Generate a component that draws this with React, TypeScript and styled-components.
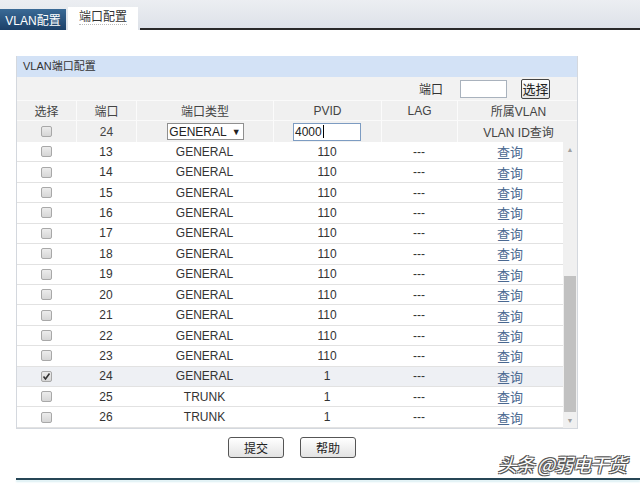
import React from 'react'
import styled, { createGlobalStyle } from 'styled-components'

const GlobalStyle = createGlobalStyle`
  body {
    margin: 0;
    background: #fff;
    font-family: "Liberation Sans", Arial, "Noto Sans CJK SC", sans-serif;
    font-size: 12px;
    color: #333;
  }
`

const Page = styled.div`
  position: relative;
  width: 640px;
  height: 489px;
  overflow: hidden;
`

const TabBar = styled.div`
  height: 30px;
  display: flex;
  align-items: flex-end;
  background: linear-gradient(#eceef2, #dde1e8);
`

const Tab = styled.div<{ $active?: boolean }>`
  height: ${(p) => (p.$active ? '21px' : '23px')};
  width: ${(p) => (p.$active ? '66px' : '70px')};
  margin-right: 2px;
  display: flex;
  align-items: center;
  justify-content: center;
  font-size: 12px;
  color: ${(p) => (p.$active ? '#fff' : '#333')};
  background: ${(p) => (p.$active ? 'linear-gradient(#3a6a96, #1c4068)' : '#fff')};
  box-sizing: border-box;
  border-bottom: ${(p) => (p.$active ? 'none' : '2px solid #fff')};
`

const TabLabel = styled.span`
  border-bottom: 1px dotted #bbb;
  line-height: 14px;
`

const TabFill = styled.div`
  flex: 1;
  height: 2px;
  background: #2a2a2a;
`

const Panel = styled.div`
  margin: 26px 0 0 16px;
  width: 562px;
  border: 1px solid #d4d8de;
  border-top: none;
  box-sizing: border-box;
`

const PanelTitle = styled.div`
  height: 21px;
  line-height: 21px;
  padding-left: 6px;
  background: #d3e2f6;
  font-size: 11px;
  color: #333;
`

const SearchBar = styled.div`
  height: 23px;
  display: flex;
  align-items: center;
  justify-content: flex-end;
  background: #f2f2f2;
  padding-right: 27px;
  gap: 0;
`

const SearchLabel = styled.span`
  margin-right: 17px;
`

const SmallInput = styled.div`
  width: 47px;
  height: 18px;
  background: #fff;
  border: 1px solid #a9b2bd;
  box-sizing: border-box;
  margin-right: 14px;
`

const SmallButton = styled.div`
  width: 29px;
  height: 20px;
  border: 1px solid #444;
  border-radius: 2px;
  box-sizing: border-box;
  background: linear-gradient(#fff, #e6e6e6);
  display: flex;
  align-items: center;
  justify-content: center;
  font-size: 13px;
  color: #222;
`

const cols = '59px 60px 137px 108px 76px 122px'
const bodyCols = '59px 60px 137px 108px 76px 106px'

const HeadRow = styled.div<{ $h: number }>`
  display: grid;
  grid-template-columns: ${cols};
  height: ${(p) => p.$h}px;
  background: #f0f0f0;
  border-top: 1px solid #fafafa;
  box-sizing: border-box;
`

const HeadCell = styled.div`
  display: flex;
  align-items: center;
  justify-content: center;
  border-left: 1px solid #fbfbfb;
  color: #444;
  &:first-child {
    border-left: none;
  }
`

const Body = styled.div`
  display: flex;
  height: 286px;
`

const Rows = styled.div`
  width: 546px;
  display: flex;
  flex-direction: column;
`

const Row = styled.div<{ $checked?: boolean }>`
  display: grid;
  grid-template-columns: ${bodyCols};
  height: 20.43px;
  box-sizing: border-box;
  border-bottom: 1px solid #e2e2e2;
  background: ${(p) => (p.$checked ? '#eef0f4' : '#fff')};
`

const Cell = styled.div`
  display: flex;
  align-items: center;
  justify-content: center;
  color: #333;
`

const Link = styled.span`
  color: #4a6890;
  font-size: 13px;
`

const Check = styled.div<{ $on?: boolean }>`
  width: 11px;
  height: 11px;
  border: 1px solid #a8a8a8;
  border-radius: 2px;
  box-sizing: border-box;
  background: linear-gradient(#ececec, #d6d6d6);
  display: flex;
  align-items: center;
  justify-content: center;
`

const Select = styled.div`
  width: 77px;
  height: 17px;
  box-sizing: border-box;
  border: 1px solid #8f8f8f;
  background: #fff;
  display: flex;
  align-items: center;
  justify-content: center;
  gap: 5px;
  font-size: 12px;
  color: #222;
`

const Arrow = styled.span`
  font-size: 9px;
`

const PvidInput = styled.div`
  width: 68px;
  height: 18px;
  box-sizing: border-box;
  border: 1px solid #7d9cc2;
  background: #fff;
  display: flex;
  align-items: center;
  padding-left: 1px;
  color: #222;
  margin-left: -1px;
`

const Caret = styled.span`
  display: inline-block;
  width: 1px;
  height: 13px;
  background: #000;
  margin-left: 1px;
`

const ScrollBar = styled.div`
  width: 16px;
  background: #f0f0f0;
  display: flex;
  flex-direction: column;
  align-items: center;
`

const ScrollArrow = styled.div`
  height: 15px;
  display: flex;
  align-items: center;
  justify-content: center;
  color: #a0a0a0;
  font-size: 7px;
`

const Track = styled.div`
  flex: 1;
  width: 100%;
  display: flex;
  flex-direction: column;
  justify-content: flex-end;
  align-items: center;
`

const Thumb = styled.div`
  width: 12px;
  height: 136px;
  background: #c1c1c1;
  margin-bottom: 1px;
`

const Buttons = styled.div`
  display: flex;
  gap: 16px;
  padding-left: 228px;
  margin-top: 8px;
`

const Button = styled.div`
  width: 56px;
  height: 21px;
  border: 1px solid #555;
  border-radius: 3px;
  box-sizing: border-box;
  background: linear-gradient(#fff, #e3e3e3);
  display: flex;
  align-items: center;
  justify-content: center;
  font-size: 12px;
  color: #222;
`

const BottomLine = styled.div`
  margin: 20px 0 0 16px;
  height: 2px;
  background: #264656;
  box-shadow: 0 2px 2px #d8eef2;
`

const Watermark = styled.div`
  position: absolute;
  right: 14px;
  bottom: 12px;
  font-family: "Noto Sans CJK SC", sans-serif;
  font-size: 19px;
  color: #fff;
  font-style: italic;
  text-shadow: -1px -1px 0 #555, 1px -1px 0 #555, -1px 1px 0 #555, 1px 1px 0 #555;
  letter-spacing: -1px;
`

const rows = [
  { port: 13, type: 'GENERAL', pvid: '110' },
  { port: 14, type: 'GENERAL', pvid: '110' },
  { port: 15, type: 'GENERAL', pvid: '110' },
  { port: 16, type: 'GENERAL', pvid: '110' },
  { port: 17, type: 'GENERAL', pvid: '110' },
  { port: 18, type: 'GENERAL', pvid: '110' },
  { port: 19, type: 'GENERAL', pvid: '110' },
  { port: 20, type: 'GENERAL', pvid: '110' },
  { port: 21, type: 'GENERAL', pvid: '110' },
  { port: 22, type: 'GENERAL', pvid: '110' },
  { port: 23, type: 'GENERAL', pvid: '110' },
  { port: 24, type: 'GENERAL', pvid: '1', checked: true },
  { port: 25, type: 'TRUNK', pvid: '1' },
  { port: 26, type: 'TRUNK', pvid: '1' },
]

function CheckBox({ on }: { on?: boolean }) {
  return (
    <Check $on={on}>
      {on && (
        <svg width="9" height="9" viewBox="0 0 9 9">
          <path d="M1.5 4.5 L3.5 7 L7.5 1.5" stroke="#333" strokeWidth="1.6" fill="none" />
        </svg>
      )}
    </Check>
  )
}

export default function App() {
  return (
    <Page>
      <GlobalStyle />
      <TabBar>
        <Tab $active>VLAN配置</Tab>
        <Tab>
          <TabLabel>端口配置</TabLabel>
        </Tab>
        <TabFill />
      </TabBar>

      <Panel>
        <PanelTitle>VLAN端口配置</PanelTitle>
        <SearchBar>
          <SearchLabel>端口</SearchLabel>
          <SmallInput />
          <SmallButton>选择</SmallButton>
        </SearchBar>
        <HeadRow $h={20}>
          <HeadCell>选择</HeadCell>
          <HeadCell>端口</HeadCell>
          <HeadCell>端口类型</HeadCell>
          <HeadCell>PVID</HeadCell>
          <HeadCell>LAG</HeadCell>
          <HeadCell>所属VLAN</HeadCell>
        </HeadRow>
        <HeadRow $h={22}>
          <HeadCell>
            <CheckBox />
          </HeadCell>
          <HeadCell>24</HeadCell>
          <HeadCell>
            <Select>
              GENERAL <Arrow>▼</Arrow>
            </Select>
          </HeadCell>
          <HeadCell>
            <PvidInput>
              4000
              <Caret />
            </PvidInput>
          </HeadCell>
          <HeadCell />
          <HeadCell>VLAN ID查询</HeadCell>
        </HeadRow>
        <Body>
          <Rows>
            {rows.map((r) => (
              <Row key={r.port} $checked={r.checked}>
                <Cell>
                  <CheckBox on={r.checked} />
                </Cell>
                <Cell>{r.port}</Cell>
                <Cell>{r.type}</Cell>
                <Cell>{r.pvid}</Cell>
                <Cell>---</Cell>
                <Cell>
                  <Link>查询</Link>
                </Cell>
              </Row>
            ))}
          </Rows>
          <ScrollBar>
            <ScrollArrow>▲</ScrollArrow>
            <Track>
              <Thumb />
            </Track>
            <ScrollArrow>▼</ScrollArrow>
          </ScrollBar>
        </Body>
      </Panel>

      <Buttons>
        <Button>提交</Button>
        <Button>帮助</Button>
      </Buttons>
      <BottomLine />
      <Watermark>头条 @弱电干货</Watermark>
    </Page>
  )
}
